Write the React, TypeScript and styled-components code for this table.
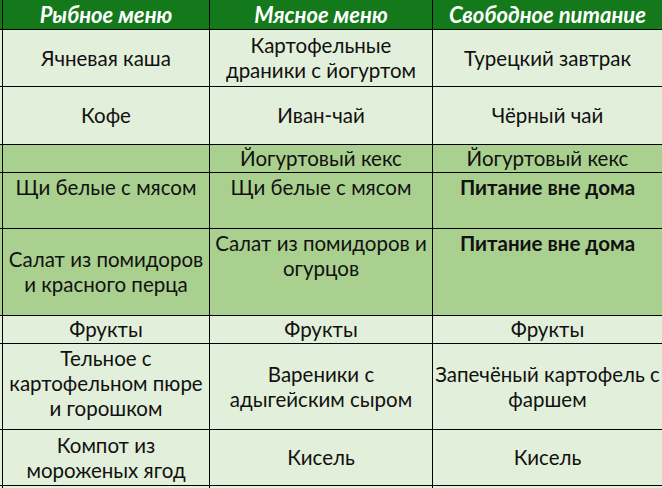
import React from "react";
import styled, { createGlobalStyle } from "styled-components";

const Global = createGlobalStyle`
  html, body { margin: 0; padding: 0; background: #e2efda; }
  body { width: 662px; height: 488px; overflow: hidden; font-family: Lato, "Open Sans", sans-serif; }
`;

const Sheet = styled.div`
  display: grid;
  width: 662px;
  grid-template-columns: 2px 206px 222px 1fr;
  grid-template-rows: 29px 56px 57px 27px 55px 86px 27px 85px 55px 20px;
  gap: 1px;
  background: #000;
`;

type Tone = "head" | "light" | "mid";
type VAlign = "top" | "center";

const bg: Record<Tone, string> = {
  head: "#13791a",
  light: "#e2efda",
  mid: "#a9d08e",
};

const Cell = styled.div<{ $tone: Tone; $v?: VAlign; $bold?: boolean }>`
  background: ${(p) => bg[p.$tone]};
  display: flex;
  align-items: ${(p) => (p.$v === "top" ? "flex-start" : "center")};
  justify-content: center;
  text-align: center;
  padding: ${(p) => (p.$v === "top" ? "2px 0 0" : "0")};
  font-size: 20.5px;
  line-height: 25px;
  color: #111;
  font-weight: ${(p) => (p.$bold ? 700 : 400)};
  white-space: nowrap;
  overflow: hidden;
`;

const HeadCell = styled(Cell)`
  color: #ffffff;
  font-style: italic;
  font-weight: 700;
  font-size: 22px;
`;

type C = { t: string; v?: VAlign; b?: boolean };
type Row = { tone: Tone; cells: C[] };

const rows: Row[] = [
  {
    tone: "light",
    cells: [{ t: "Ячневая каша" }, { t: "Картофельные\nдраники с йогуртом" }, { t: "Турецкий завтрак" }],
  },
  { tone: "light", cells: [{ t: "Кофе" }, { t: "Иван-чай" }, { t: "Чёрный чай" }] },
  { tone: "mid", cells: [{ t: "" }, { t: "Йогуртовый кекс" }, { t: "Йогуртовый кекс" }] },
  {
    tone: "mid",
    cells: [
      { t: "Щи белые с мясом", v: "top" },
      { t: "Щи белые с мясом", v: "top" },
      { t: "Питание вне дома", v: "top", b: true },
    ],
  },
  {
    tone: "mid",
    cells: [
      { t: "Салат из помидоров\nи красного перца" },
      { t: "Салат из помидоров и\nогурцов", v: "top" },
      { t: "Питание вне дома", v: "top", b: true },
    ],
  },
  { tone: "light", cells: [{ t: "Фрукты" }, { t: "Фрукты" }, { t: "Фрукты" }] },
  {
    tone: "light",
    cells: [
      { t: "Тельное с\nкартофельном пюре\nи горошком", v: "top" },
      { t: "Вареники с\nадыгейским сыром" },
      { t: "Запечёный картофель с\nфаршем" },
    ],
  },
  { tone: "light", cells: [{ t: "Компот из\nмороженых ягод" }, { t: "Кисель" }, { t: "Кисель" }] },
  { tone: "light", cells: [{ t: "" }, { t: "" }, { t: "" }] },
];

const Lines = ({ text }: { text: string }) => (
  <span>
    {text.split("\n").map((l, i, a) => (
      <React.Fragment key={i}>
        {l}
        {i < a.length - 1 && <br />}
      </React.Fragment>
    ))}
  </span>
);

export default function App() {
  return (
    <>
      <Global />
      <Sheet>
        <HeadCell $tone="head" />
        <HeadCell $tone="head">Рыбное меню</HeadCell>
        <HeadCell $tone="head">Мясное меню</HeadCell>
        <HeadCell $tone="head">Свободное питание</HeadCell>
        {rows.map((r, ri) => (
          <React.Fragment key={ri}>
            <Cell $tone={r.tone} />
            {r.cells.map((c, ci) => (
              <Cell key={ci} $tone={r.tone} $v={c.v} $bold={c.b}>
                <Lines text={c.t} />
              </Cell>
            ))}
          </React.Fragment>
        ))}
      </Sheet>
    </>
  );
}
